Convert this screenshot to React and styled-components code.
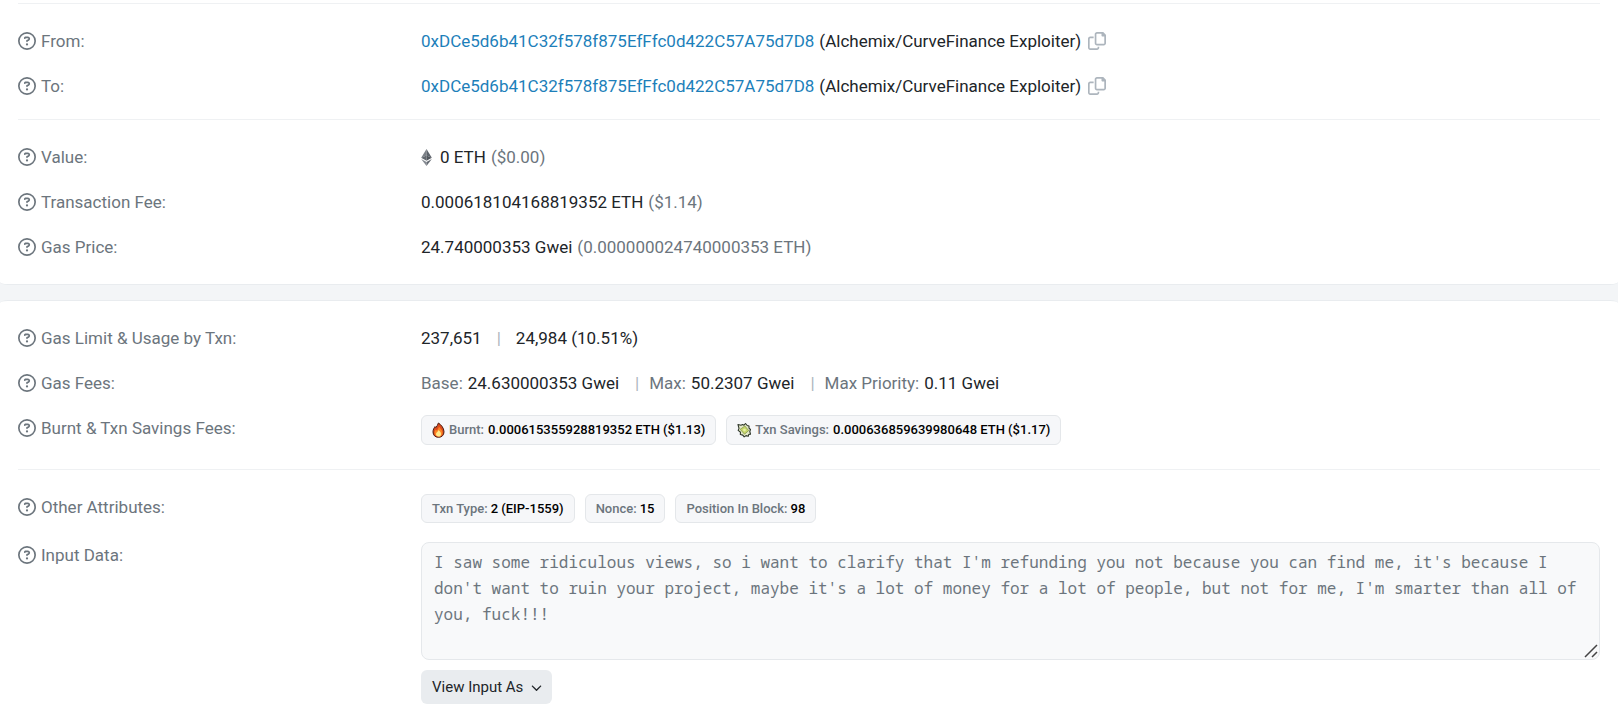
import React from 'react'
import styled, { createGlobalStyle } from 'styled-components'
import { FaChevronDown, FaRegCircleQuestion } from 'react-icons/fa6'

const GlobalStyle = createGlobalStyle`
  * {
    box-sizing: border-box;
  }
  body {
    margin: 0;
    background: #f3f5f7;
    color: #212529;
    font-family: Roboto, 'Liberation Sans', sans-serif;
    font-size: 17px;
    line-height: 26px;
  }
`

const Page = styled.main`
  display: flex;
  flex-direction: column;
  gap: 15px;
`

const Card = styled.section`
  padding: ${props => (props.$first ? '3px 18px 0' : '0 18px')};
  background: #fff;
  border: solid #e9ecef;
  border-width: ${props => (props.$first ? '0 0 1px' : '1px 0 0')};
  border-radius: ${props =>
    props.$first ? '0 0 8px 8px / 0 0 3px 3px' : '8px 8px 0 0 / 3px 3px 0 0'};
`

const Divider = styled.hr`
  height: 1px;
  margin: 0;
  border: 0;
  background: #eff1f3;
`

const Group = styled.dl`
  display: flex;
  flex-direction: column;
  gap: 19px;
  margin: 0;
  padding: 24px 0 ${props => (props.$tight ? '20px' : '24px')};
`

const Row = styled.div`
  display: grid;
  grid-template-columns: minmax(0, 1fr) minmax(0, 3fr);
  gap: 10px;
`

const Term = styled.dt`
  display: flex;
  align-items: center;
  align-self: start;
  gap: 5px;
  color: #6c757d;

  svg {
    flex: none;
  }
`

const Details = styled.dd`
  display: flex;
  flex-wrap: wrap;
  align-items: center;
  gap: ${props => (props.$badges ? '10px' : '0 5px')};
  margin: 0;
`

const Muted = styled.span`
  color: #6c757d;
`

const Bar = styled.span`
  margin: ${props => (props.$wide ? '0 10px' : '0 5px 0 11px')};
  color: #adb5bd;
`

const Address = styled.a`
  color: #1d7fba;
  text-decoration: none;
`

const CopyButton = styled.button`
  display: flex;
  margin-left: 2px;
  padding: 0;
  border: 0;
  background: none;
  color: #adb5bd;
  cursor: pointer;
`

const Badge = styled.span`
  display: inline-flex;
  align-items: center;
  gap: ${props => (props.$icon ? '4px' : '3px')};
  padding: ${props => (props.$icon ? '4px 10px' : '4px 10px 3px')};
  border: 1px solid #e4e7ea;
  border-radius: 6px;
  background: #f6f7f9;
  color: #000;
  font-size: 13px;
  font-weight: 500;
  line-height: 20px;
`

const InputBlock = styled.dd`
  display: flex;
  flex-direction: column;
  align-items: flex-start;
  gap: 10px;
  margin: 0;
`

const InputFrame = styled.div`
  position: relative;
  width: 100%;
`

const InputText = styled.textarea`
  display: block;
  width: 100%;
  height: 118px;
  padding: 6px 12px;
  border: 1px solid #e5e8eb;
  border-radius: 8px;
  background: #f8f9fa;
  color: #6c757d;
  font-family: 'Noto Sans Mono', 'DejaVu Sans Mono', monospace;
  font-size: 16px;
  line-height: 26px;
  resize: none;
`

const Grip = styled.svg`
  position: absolute;
  right: 2px;
  bottom: 2px;
  pointer-events: none;
`

const ViewButton = styled.button`
  display: flex;
  align-items: center;
  gap: 8px;
  padding: 5px 10px 5px 11px;
  border: 0;
  border-radius: 6px;
  background: #e9ecef;
  color: #212529;
  font: inherit;
  font-size: 15px;
  line-height: 24px;
`

const EtherMark = styled.svg`
  margin-right: 3px;
`

const EtherIcon = () => (
  <EtherMark width="11" height="17" viewBox="0 0 10 16">
    <path d="M5 0L0 8.2 5 6z" fill="#7b8087" />
    <path d="M5 0l5 8.2L5 6z" fill="#5d636b" />
    <path d="M5 6L0 8.2 5 11z" fill="#62686f" />
    <path d="M5 6l5 2.2L5 11z" fill="#51565d" />
    <path d="M0 9.3l5 2.9V16z" fill="#858a91" />
    <path d="M10 9.3l-5 2.900V16z" fill="#656b73" />
  </EtherMark>
)

const CopyIcon = () => (
  <svg width="18" height="18" viewBox="0 0 512 512" fill="currentColor">
    <path d="M502.6 70.63l-61.25-61.25C435.4 3.371 427.2 0 418.7 0H255.1c-35.35 0-64 28.66-64 64l.0195 256C192 355.4 220.7 384 256 384h192c35.2 0 64-28.8 64-64V93.25C512 84.77 508.6 76.63 502.6 70.63zM464 320c0 8.836-7.164 16-16 16H255.1c-8.838 0-16-7.164-16-16L239.1 64.13c0-8.836 7.164-16 16-16h128L384 96c0 17.67 14.33 32 32 32h47.1V320zM272 448c0 8.836-7.164 16-16 16H63.1c-8.838 0-16-7.164-16-16L47.98 192.1c0-8.836 7.164-16 16-16H160V128H63.99c-35.35 0-64 28.65-64 64l.0098 256C.002 483.3 28.66 512 64 512h192c35.2 0 64-28.8 64-64v-32h-47.1L272 448z" />
  </svg>
)

const FireIcon = () => (
  <svg width="13" height="16" viewBox="0 0 13 16">
    <path
      d="M6.4 1C8.5 2.4 12 5.5 12 9.8c0 3.5-2.3 5.5-5.5 5.5S1 13.3 1 9.9C1 7.5 2.2 5.9 3 4.6l.8 1C4.8 4.3 6 2.8 6.4 1z"
      fill="#dc4a1c"
      stroke="#4a1d12"
      strokeWidth="1"
      strokeLinejoin="round"
    />
    <path d="M6.9 4.5c1 1.7 3.7 3.3 3.7 6.2 0 2.4-1.6 3.9-4 3.9s-4.1-1.4-4.1-3.8c0-1.500.6-2.500 1.300-3.400l.9 1.200c1.100-1.100 2-2.300 2.200-4.100z" fill="#fb8424" />
    <path d="M6.7 7.9c1 1.2 2.3 2.4 2.3 4s-.9 2.6-2.5 2.6S4 13.5 4 12s1.7-2.3 2.7-4.1z" fill="#ffe98a" />
  </svg>
)

const MoneyIcon = () => (
  <svg width="14" height="16" viewBox="0 0 14 16">
    <path
      d="M1 2.5l3 .7 1.5-.6 1.5.6L8.5 1.5l1.7 2 1.8.6v2l1.5 1.4-.7 2 .7 2.6-1.8.4-.4 1.8-2.3-.7-1.8 1.3-1.4-1.8-2.5-.6.2-2.3L1.2 8.4l.8-2z"
      fill="#e4e9c8"
      stroke="#30382b"
      strokeWidth="1.1"
      strokeLinejoin="round"
    />
    <path d="M3.2 7.3l4.7-3.3 3.8 4.6-4.2 3.6z" fill="#c6d76a" stroke="#7b8d45" strokeWidth="0.7" />
    <circle cx="7.5" cy="8.1" r="1.4" fill="#e9f0a5" />
  </svg>
)

const Label = ({ children, htmlFor }) => (
  <Term>
    <FaRegCircleQuestion size={18} />
    {htmlFor ? <label htmlFor={htmlFor}>{children}</label> : <span>{children}</span>}
  </Term>
)

const Field = ({ label, badges, children }) => (
  <Row>
    <Label>{label}</Label>
    <Details $badges={badges}>{children}</Details>
  </Row>
)

const Party = ({ label }) => (
  <Field label={label}>
    <Address href="#address">0xDCe5d6b41C32f578f875EfFfc0d422C57A75d7D8</Address>
    <span>(Alchemix/CurveFinance Exploiter)</span>
    <CopyButton type="button" aria-label="Copy address">
      <CopyIcon />
    </CopyButton>
  </Field>
)

const Attribute = ({ name, icon, children }) => (
  <Badge $icon={icon}>
    {icon}
    <Muted>{name}</Muted>
    <span>{children}</span>
  </Badge>
)

const message =
  "I saw some ridiculous views, so i want to clarify that I'm refunding you not because you can find me, it's because I don't want to ruin your project, maybe it's a lot of money for a lot of people, but not for me, I'm smarter than all of you, fuck!!!"

const App = () => (
  <>
    <GlobalStyle />
    <Page>
      <Card $first>
        <Divider />
        <Group $tight>
          <Party label="From:" />
          <Party label="To:" />
        </Group>
        <Divider />
        <Group>
          <Field label="Value:">
            <EtherIcon />
            <span>0 ETH</span>
            <Muted>($0.00)</Muted>
          </Field>
          <Field label="Transaction Fee:">
            <span>0.000618104168819352 ETH</span>
            <Muted>($1.14)</Muted>
          </Field>
          <Field label="Gas Price:">
            <span>24.740000353 Gwei</span>
            <Muted>(0.000000024740000353 ETH)</Muted>
          </Field>
        </Group>
      </Card>
      <Card>
        <Group>
          <Field label="Gas Limit &amp; Usage by Txn:">
            <span>237,651</span>
            <Bar $wide>|</Bar>
            <span>24,984 (10.51%)</span>
          </Field>
          <Field label="Gas Fees:">
            <Muted>Base:</Muted>
            <span>24.630000353 Gwei</span>
            <Bar>|</Bar>
            <Muted>Max:</Muted>
            <span>50.2307 Gwei</span>
            <Bar>|</Bar>
            <Muted>Max Priority:</Muted>
            <span>0.11 Gwei</span>
          </Field>
          <Field label="Burnt &amp; Txn Savings Fees:" badges>
            <Attribute name="Burnt:" icon={<FireIcon />}>
              0.000615355928819352 ETH ($1.13)
            </Attribute>
            <Attribute name="Txn Savings:" icon={<MoneyIcon />}>
              0.000636859639980648 ETH ($1.17)
            </Attribute>
          </Field>
        </Group>
        <Divider />
        <Group>
          <Field label="Other Attributes:" badges>
            <Attribute name="Txn Type:">2 (EIP-1559)</Attribute>
            <Attribute name="Nonce:">15</Attribute>
            <Attribute name="Position In Block:">98</Attribute>
          </Field>
          <Row>
            <Label htmlFor="input-data">Input Data:</Label>
            <InputBlock>
              <InputFrame>
                <InputText id="input-data" readOnly spellCheck={false} value={message} />
                <Grip width="14" height="14" viewBox="0 0 14 14" stroke="#444" strokeWidth="1.5">
                  <path d="M1 13L13 1M8 13l5-5" />
                </Grip>
              </InputFrame>
              <ViewButton type="button">
                View Input As
                <FaChevronDown size={11} />
              </ViewButton>
            </InputBlock>
          </Row>
        </Group>
      </Card>
    </Page>
  </>
)

export default App
